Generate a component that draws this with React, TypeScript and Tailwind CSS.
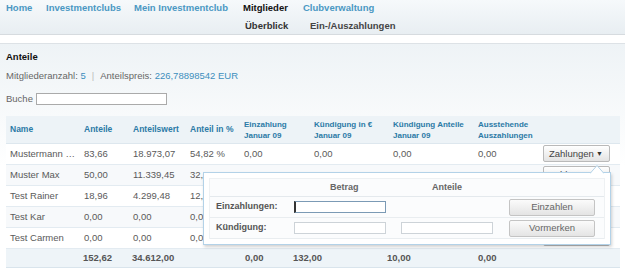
import React from "react";

type Member = {
  name: string;
  anteile: string;
  wert: string;
  prozent: string;
  einzahlung: string;
  kuendigungEur: string;
  kuendigungAnteile: string;
  ausstehend: string;
};

const members: Member[] = [
  { name: "Mustermann N...", anteile: "83,66", wert: "18.973,07", prozent: "54,82 %", einzahlung: "0,00", kuendigungEur: "0,00", kuendigungAnteile: "0,00", ausstehend: "0,00" },
  { name: "Muster Max", anteile: "50,00", wert: "11.339,45", prozent: "32,76 %", einzahlung: "0,00", kuendigungEur: "0,00", kuendigungAnteile: "0,00", ausstehend: "0,00" },
  { name: "Test Rainer", anteile: "18,96", wert: "4.299,48", prozent: "12,42 %", einzahlung: "0,00", kuendigungEur: "0,00", kuendigungAnteile: "0,00", ausstehend: "0,00" },
  { name: "Test Kar", anteile: "0,00", wert: "0,00", prozent: "0,00 %", einzahlung: "0,00", kuendigungEur: "0,00", kuendigungAnteile: "0,00", ausstehend: "0,00" },
  { name: "Test Carmen", anteile: "0,00", wert: "0,00", prozent: "0,00 %", einzahlung: "0,00", kuendigungEur: "0,00", kuendigungAnteile: "0,00", ausstehend: "0,00" },
];

function ZahlungenButton() {
  return (
    <button className="flex h-[17px] w-[67px] items-center justify-between rounded-[2px] border border-[#b9b9b9] bg-gradient-to-b from-white to-[#e3e3e3] pl-[5px] pr-[6px] text-[9.5px] text-[#444]">
      <span>Zahlungen</span>
      <span className="text-[7px] text-[#333]">▼</span>
    </button>
  );
}

function PopupButton({ label }: { label: string }) {
  return (
    <button className="h-[17px] w-[86px] rounded-[2px] border border-[#c4c4c4] bg-gradient-to-b from-[#fbfbfb] to-[#e4e4e4] text-[9.5px] text-[#666]">
      {label}
    </button>
  );
}

export default function App() {
  const headCell = "px-[4px] text-left align-middle text-[8.5px] font-bold leading-[11px] text-[#2b7aa6]";
  const cell = "px-[4px] text-[9.5px] text-[#5a5a5a]";

  return (
    <div className="relative h-[277px] w-[625px] overflow-hidden bg-white font-['Liberation_Sans',Arial,sans-serif]">
      <nav className="h-[35px] border-b border-[#d6dbdf] bg-gradient-to-b from-[#f6f9fb] to-[#e8eef2]">
        <div className="flex pl-[6px] pt-[2px] text-[9.5px] font-bold leading-[11px]">
          <span className="w-[40px] text-[#4a98c3]">Home</span>
          <span className="w-[88px] text-[#4a98c3]">Investmentclubs</span>
          <span className="w-[109px] text-[#4a98c3]">Mein Investmentclub</span>
          <span className="w-[60px] text-[#111]">Mitglieder</span>
          <span className="text-[#4a98c3]">Clubverwaltung</span>
        </div>
        <div className="mt-[7px] flex pl-[245px] text-[9.5px] font-bold leading-[11px]">
          <span className="w-[65px] text-[#333]">Überblick</span>
          <span className="text-[#444]">Ein-/Auszahlungen</span>
        </div>
      </nav>
      <div className="h-[9px] border-b border-[#dde2e6] bg-white" />

      <main className="bg-gradient-to-b from-[#eef3f6] via-white to-white px-[6px] pt-[7px]">
        <h1 className="text-[9.5px] font-bold leading-[12px] text-[#111]">Anteile</h1>
        <p className="mt-[7px] text-[9.5px] leading-[12px] text-[#666]">
          Mitgliederanzahl: <span className="text-[#3d8fbd]">5</span>
          <span className="mx-[6px] text-[#bbb]">|</span>
          Anteilspreis: <span className="text-[#3d8fbd]">226,78898542 EUR</span>
        </p>
        <div className="mt-[10px] flex items-center gap-[3px] text-[9.5px] text-[#666]">
          <span>Buche</span>
          <input className="h-[12px] w-[131px] border border-[#aaa] bg-white" />
        </div>

        <table className="mt-[10px] w-[614px] table-fixed border-collapse">
          <colgroup>
            <col className="w-[74px]" />
            <col className="w-[49px]" />
            <col className="w-[57px]" />
            <col className="w-[54px]" />
            <col className="w-[70px]" />
            <col className="w-[79px]" />
            <col className="w-[85px]" />
            <col className="w-[66px]" />
            <col className="w-[80px]" />
          </colgroup>
          <thead>
            <tr className="h-[27px] border-b border-[#dde7ee] bg-[#edf3f7]">
              <th className={headCell}>Name</th>
              <th className={headCell}>Anteile</th>
              <th className={headCell}>Anteilswert</th>
              <th className={headCell}>Anteil in %</th>
              <th className={`${headCell} text-[8px]`}>Einzahlung<br />Januar 09</th>
              <th className={`${headCell} text-[8px]`}>Kündigung in €<br />Januar 09</th>
              <th className={`${headCell} text-[8px]`}>Kündigung Anteile<br />Januar 09</th>
              <th className={`${headCell} text-[8px]`}>Ausstehende<br />Auszahlungen</th>
              <th />
            </tr>
          </thead>
          <tbody>
            {members.map((member, index) => (
              <tr key={member.name} className={`h-[21px] border-b border-[#e3ebf1] ${index % 2 === 1 ? "bg-[#f7f9fb]" : "bg-white"}`}>
                <td className={`${cell} truncate`}>{member.name}</td>
                <td className={cell}>{member.anteile}</td>
                <td className={cell}>{member.wert}</td>
                <td className={cell}>{member.prozent}</td>
                <td className={cell}>{member.einzahlung}</td>
                <td className={cell}>{member.kuendigungEur}</td>
                <td className={cell}>{member.kuendigungAnteile}</td>
                <td className={cell}>{member.ausstehend}</td>
                <td className="pl-[3px]">
                  <ZahlungenButton />
                </td>
              </tr>
            ))}
            <tr className="h-[19px] border-b border-[#d9e4ec] bg-[#eef4f8]">
              <td colSpan={9} className="p-0">
                <div className="flex text-[9.5px] font-bold text-[#555]">
                  <span className="w-[77px]" />
                  <span className="w-[49px]">152,62</span>
                  <span className="w-[113px]">34.612,00</span>
                  <span className="w-[48px]">0,00</span>
                  <span className="w-[94px]">132,00</span>
                  <span className="w-[91px]">10,00</span>
                  <span>0,00</span>
                </div>
              </td>
            </tr>
          </tbody>
        </table>
        <div className="h-[20px]" />
      </main>

      {/* Zahlungen popup */}
      <div className="absolute left-[203px] top-[172px] h-[73px] w-[408px] border border-[#b3d2e8] bg-white p-[5px] shadow-[1px_2px_3px_rgba(0,0,0,0.18)]">
        <svg className="absolute -top-[8px] right-[6px]" width="14" height="9" viewBox="0 0 14 9">
          <path d="M0 8.5 L7 0.5 L14 8.5" fill="white" stroke="#b3d2e8" strokeWidth="1" />
        </svg>
        <div className="h-full border border-[#eef1f3] bg-[#fbfcfd] text-[9px]">
          <div className="flex h-[18px] items-center border-b border-[#e4e9ed] font-bold text-[#666]">
            <span className="w-[120px]" />
            <span className="w-[102px]">Betrag</span>
            <span>Anteile</span>
          </div>
          <div className="flex h-[21px] items-center border-b border-[#e9edf0] pl-[6px]">
            <span className="w-[78px] font-bold text-[#555]">Einzahlungen:</span>
            <input className="h-[12px] w-[92px] border border-[#7b9ab5] border-l-[2px] border-l-[#333] bg-white" />
            <span className="w-[123px]" />
            <PopupButton label="Einzahlen" />
          </div>
          <div className="flex h-[21px] items-center border-b border-[#e9edf0] pl-[6px]">
            <span className="w-[78px] font-bold text-[#555]">Kündigung:</span>
            <input className="h-[12px] w-[92px] border border-[#cdd3d8] bg-white" />
            <span className="w-[15px]" />
            <input className="h-[12px] w-[92px] border border-[#cdd3d8] bg-white" />
            <span className="w-[16px]" />
            <PopupButton label="Vormerken" />
          </div>
        </div>
      </div>
    </div>
  );
}
